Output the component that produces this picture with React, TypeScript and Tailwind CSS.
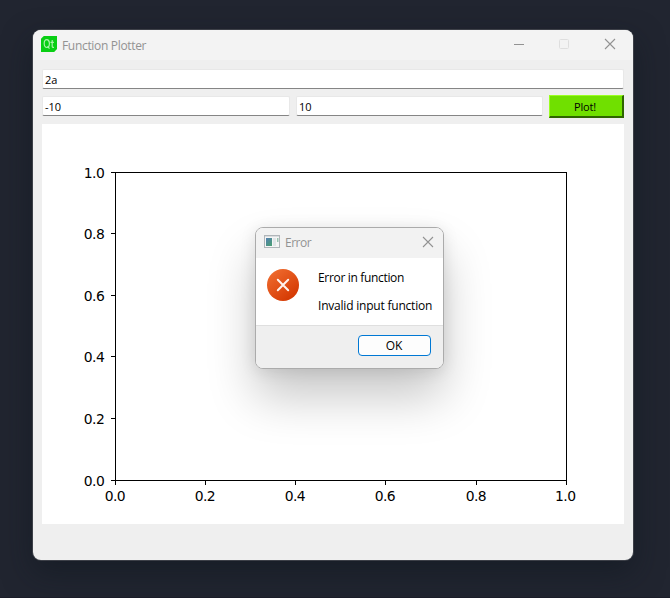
import React from "react";

const TICKS = [0, 1, 2, 3, 4, 5];
const Y_POS = [480.5, 418.5, 356.5, 295.5, 233.5, 172.5];
const X_POS = [115.5, 205.5, 295.5, 385.5, 476.5, 566.5];

function QtLogo() {
  return (
    <svg width="16" height="16" viewBox="0 0 16 16" className="shrink-0">
      <path d="M2.8 0H16v13L13.2 16H0V2.8z" fill="#09cf14" />
      <ellipse cx="5.8" cy="7.6" rx="2.6" ry="3.9" fill="none" stroke="#a9f2a8" strokeWidth="1.2" />
      <path d="M6.6 10.4l1.9 2.3M11.2 4v6.2c0 1.1.6 1.4 1.8 1.1M9.5 6.3h3.4" fill="none" stroke="#a9f2a8" strokeWidth="1.2" />
    </svg>
  );
}

function Field({ value, className }: { value: string; className: string }) {
  return (
    <div className={`flex h-5 items-center rounded-[2px] border border-[#e8e8e8] border-b-[#858585] bg-white pl-[2px] text-[11px] leading-none tracking-[-0.1px] text-black ${className}`}>
      <span>{value}</span>
    </div>
  );
}

function Plot() {
  return (
    <svg width="582" height="400" viewBox="42 124 582 400" className="block bg-white">
      <g fill="none" stroke="#000" strokeWidth="1" shapeRendering="crispEdges">
        <rect x="115.5" y="172.5" width="451" height="308" />
        {TICKS.map((i) => (
          <path key={i} d={`M111 ${Y_POS[i]}H115M${X_POS[i]} 481V485`} />
        ))}
      </g>
      <g fill="#000" fontSize="13.9" fontFamily="DejaVu Sans, sans-serif">
        {TICKS.map((i) => (
          <React.Fragment key={i}>
            <text x="104.8" y={Y_POS[i] + 5.3} textAnchor="end" textLength="21">{(i / 5).toFixed(1)}</text>
            <text x={X_POS[i] - (i === 5 ? 1 : 0.3)} y="501" textAnchor="middle" textLength="21">{(i / 5).toFixed(1)}</text>
          </React.Fragment>
        ))}
      </g>
    </svg>
  );
}

function ErrorDialog() {
  return (
    <div className="absolute left-[255px] top-[227px] flex h-[142px] w-[189px] flex-col overflow-hidden rounded-[8px] border border-[#ababab] bg-white shadow-[0_28px_48px_rgba(0,0,0,0.22),0_2px_16px_rgba(0,0,0,0.1)]">
      <div className="flex h-[30px] items-center bg-[#f2f2f2] pb-[2px] pl-2 pr-[9px]">
        <svg width="16" height="14" viewBox="0 0 16 14">
          <rect x=".5" y=".5" width="15" height="12" fill="#f5f5f5" stroke="#b0b5b9" />
          <path d="M1 1.5h14" stroke="#dadddf" />
          <defs>
            <linearGradient id="picture" x2=".7" y2="1">
              <stop stopColor="#537fb1" />
              <stop offset="1" stopColor="#4b9c78" />
            </linearGradient>
          </defs>
          <path d="M2 3h6v8H2z" fill="url(#picture)" />
          <path d="M9 3h3v8H9z" fill="#e0e5e7" />
          <path d="M13 3h1.5v4H13z" fill="#9bc4b1" />
        </svg>
        <span className="ml-[5px] mt-[2px] text-[12px] leading-none tracking-[-0.5px] text-[#929292]">Error</span>
        <svg className="ml-auto" width="12" height="12" viewBox="0 0 12 12">
          <path d="M1 1l10 10M11 1L1 11" stroke="#929292" strokeWidth="1.1" />
        </svg>
      </div>
      <div className="flex h-[67px] pl-[11px] pt-[11px]">
        <svg width="32" height="32" viewBox="0 0 32 32" className="shrink-0">
          <defs>
            <linearGradient id="error" x1=".15" y1=".05" x2=".85" y2=".95">
              <stop stopColor="#ef6b2e" />
              <stop offset="1" stopColor="#d33600" />
            </linearGradient>
          </defs>
          <circle cx="16" cy="16" r="16" fill="url(#error)" />
          <path d="M10.8 10.8l10.4 10.4M21.2 10.8L10.8 21.2" stroke="#fff4ee" strokeWidth="2" strokeLinecap="round" />
        </svg>
        <div className="ml-[19px] mt-[2px] whitespace-nowrap text-[12px] leading-[14px] text-black">
          <p className="tracking-[-0.33px]">Error in function</p>
          <p className="mt-[14px] tracking-[-0.21px]">Invalid input function</p>
        </div>
      </div>
      <div className="flex flex-1 justify-end border-t border-[#dfdfdf] bg-[#efefef] pr-3 pt-[9px]">
        <button className="h-[21px] w-[73px] rounded-[4px] border border-[#0078d4] bg-[#fdfdfd] pr-[1px] text-[12px] leading-none tracking-[-0.2px] text-black">OK</button>
      </div>
    </div>
  );
}

export default function App() {
  return (
    <main className="relative h-[598px] w-[670px] overflow-hidden bg-[#212530] pl-[33px] pt-[30px] font-['Open_Sans',sans-serif] after:absolute after:inset-x-0 after:bottom-0 after:h-px after:bg-[#1b1d29]">
      <section className="h-[530px] w-[600px] overflow-hidden rounded-[8px] bg-[#efefef] shadow-[0_0_0_1px_#3d4048,0_12px_30px_rgba(14,22,29,0.5)]">
        <header className="flex h-[30px] items-center bg-[#f3f3f3] pb-[2px] pl-2">
          <QtLogo />
          <span className="ml-[5px] mt-[3px] text-[12px] leading-none tracking-[-0.32px] text-[#929292]">Function Plotter</span>
          <svg className="ml-auto mr-[17px]" width="103" height="12" viewBox="0 0 103 12" fill="none">
            <path d="M1 6.5h10" stroke="#929292" />
            <rect x="46.5" y="1.5" width="9" height="9" rx="1" stroke="#dedede" />
            <path d="M92 1l10 10M102 1L92 11" stroke="#929292" strokeWidth="1.1" />
          </svg>
        </header>
        <div className="px-[9px] pt-[9px]">
          <Field value="2a" className="w-[582px]" />
          <div className="mt-[6px] flex h-[23px]">
            <Field value="-10" className="mt-[1px] w-[248px]" />
            <Field value="10" className="ml-[6px] mt-[1px] w-[247px]" />
            <button className="ml-[6px] h-[23px] w-[75px] border border-[#9aff20] border-b-2 border-r-2 border-b-[#2e6500] border-r-[#2e6500] bg-[#70e000] pr-[2px] text-[11px] leading-none tracking-[-0.2px] text-black">Plot!</button>
          </div>
          <div className="mt-[6px] h-[400px] w-[582px]"><Plot /></div>
        </div>
      </section>
      <ErrorDialog />
    </main>
  );
}
